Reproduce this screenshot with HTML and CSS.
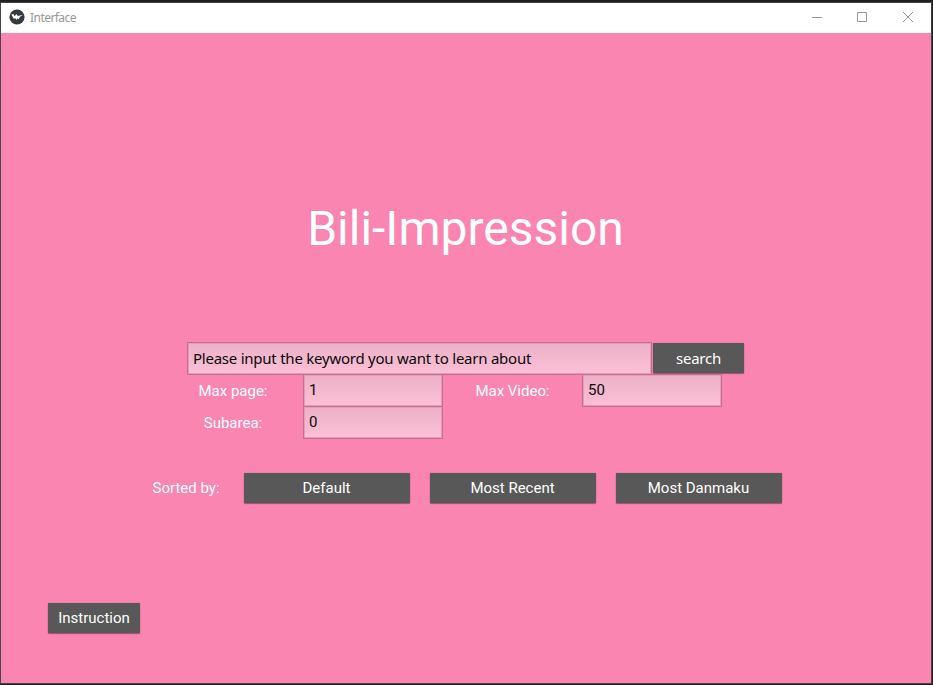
FILE: index.html
```html
<!DOCTYPE html>
<html lang="en">
<head>
<meta charset="utf-8">
<title>Interface</title>
<link rel="stylesheet" href="styles.css">
</head>
<body>
<div class="window">
  <header class="titlebar">
    <svg class="logo" width="16" height="16" viewBox="0 0 16 16"><circle cx="8" cy="8" r="7.6" fill="#37393b"/><path d="M2.3 5.5 4.4 5l1.4 2.3L7.3 5l1.6 2.1L14 5.7l-3 2.1-1.2 2.5-1.4-1.1L7.6 11 6 8.9l-1.1 1z" fill="#fff"/></svg>
    <span class="caption">Interface</span>
    <svg class="control" width="46" height="30" viewBox="0 0 46 30"><path d="M19 14.5h10"/></svg>
    <svg class="control" width="46" height="30" viewBox="0 0 46 30"><path d="M18.5 9.5h9v9h-9z"/></svg>
    <svg class="control" width="46" height="30" viewBox="0 0 46 30"><path d="m18 9 10 10M28 9 18 19"/></svg>
  </header>
  <main class="content">
    <h1 class="title">Bili-Impression</h1>
    <div class="search-row">
      <div class="field keyword">Please input the keyword you want to learn about</div>
      <div class="button search">search</div>
    </div>
    <div class="options">
      <div class="label">Max page:</div>
      <div class="field">1</div>
      <div class="label">Max Video:</div>
      <div class="field">50</div>
      <div class="label">Subarea:</div>
      <div class="field">0</div>
    </div>
    <div class="sort-row">
      <div class="label sort-label">Sorted by:</div>
      <div class="button">Default</div>
      <div class="button">Most Recent</div>
      <div class="button">Most Danmaku</div>
    </div>
    <div class="button instruction">Instruction</div>
  </main>
</div>
</body>
</html>
```
FILE: styles.css
```css
* { box-sizing: border-box; }
body {
  margin: 0;
  width: 933px;
  height: 685px;
  padding: 2px 1px 1px 0;
  overflow: hidden;
  background: #202020;
  font-family: Roboto, sans-serif;
  font-size: 15px;
  color: #fff;
}
.window {
  height: 682px;
  border: 1px solid #474347;
  background: #f985b0;
}
.titlebar {
  display: flex;
  align-items: center;
  height: 30px;
  padding-left: 8px;
  background: #fff;
}
.logo { margin-top: -2px; }
.caption {
  flex: 1;
  margin-left: 5px;
  color: #999;
  font: 12px/16px "Noto Sans", sans-serif;
  letter-spacing: -0.55px;
}
.control { fill: none; stroke: #999; stroke-width: 1; }
.content { height: 650px; }
.title {
  margin: 0 1px 0 0;
  padding-top: 168px;
  height: 309px;
  font-size: 48px;
  line-height: 56px;
  font-weight: 400;
  text-align: center;
}
.search-row {
  display: flex;
  gap: 1px;
  margin-left: 186px;
}
.field {
  width: 140px;
  height: 33px;
  padding: 0 5px;
  border: 1px solid #c16e8f;
  background: linear-gradient(#ecb0c7, #fbc0d6);
  box-shadow: inset 0 0 0 1px #e39db8;
  color: #0b080a;
  line-height: 30px;
  white-space: nowrap;
}
.keyword, .search {
  font-family: "Noto Sans", sans-serif;
  font-size: 15px;
  letter-spacing: -0.24px;
}
.keyword { width: 465px; }
.button {
  width: 166px;
  height: 30px;
  border-radius: 1px;
  background: #585858;
  box-shadow: 0 0 1px #8c5068, 0 1px 1px #9c526d;
  line-height: 30px;
  text-align: center;
}
.search { width: 91px; margin-top: 1px; line-height: 31px; }
.options {
  display: grid;
  grid-template-columns: 140px 140px 139px 140px;
  grid-auto-rows: 32px;
  margin: -1px 0 0 162px;
}
.label { line-height: 34px; text-align: center; }
.sort-row {
  display: flex;
  gap: 20px;
  margin: 35px 0 0 143.5px;
}
.sort-label { width: 83px; margin-right: -4px; line-height: 30px; }
.instruction { width: 92px; margin: 100px 0 0 47px; }
```
